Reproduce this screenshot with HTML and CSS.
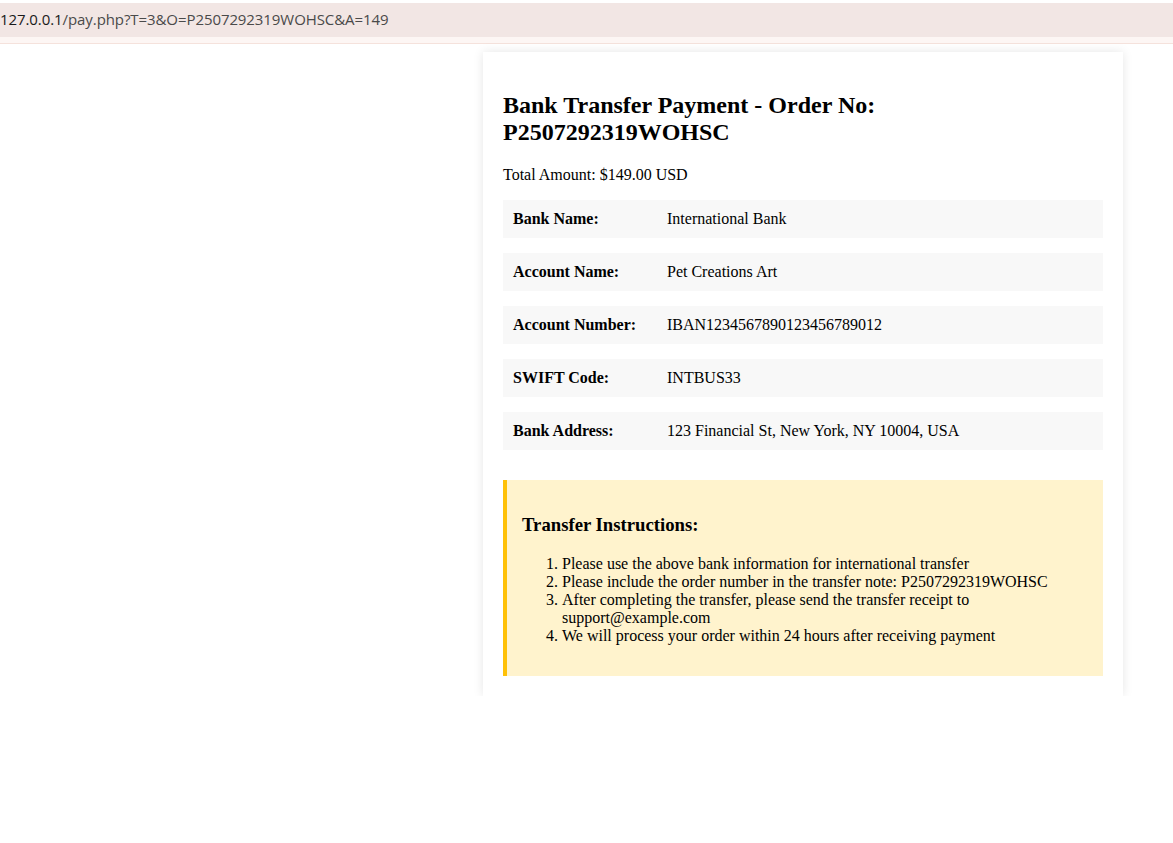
FILE: index.html
```html
<!DOCTYPE html>
<html>
<head>
<meta charset="utf-8">
<title>Bank Transfer Payment</title>
<link rel="stylesheet" href="styles.css">
</head>
<body>
<div class="addressbar">
  <div class="url"><span class="host">127.0.0.1</span>/pay.php?T=3&amp;O=P2507292319WOHSC&amp;A=149</div>
</div>
<div class="addressbar-bottom"></div>
<main class="page">
  <div class="card">
    <h2 class="title">Bank Transfer Payment - Order No: P2507292319WOHSC</h2>
    <p class="total">Total Amount: $149.00 USD</p>
    <div class="row"><span class="label">Bank Name:</span><span class="value">International Bank</span></div>
    <div class="row"><span class="label">Account Name:</span><span class="value">Pet Creations Art</span></div>
    <div class="row"><span class="label">Account Number:</span><span class="value">IBAN1234567890123456789012</span></div>
    <div class="row"><span class="label">SWIFT Code:</span><span class="value">INTBUS33</span></div>
    <div class="row"><span class="label">Bank Address:</span><span class="value">123 Financial St, New York, NY 10004, USA</span></div>
    <div class="instructions">
      <h3 class="inst-title">Transfer Instructions:</h3>
      <ol class="inst-list">
        <li>Please use the above bank information for international transfer</li>
        <li>Please include the order number in the transfer note: P2507292319WOHSC</li>
        <li>After completing the transfer, please send the transfer receipt to support@example.com</li>
        <li>We will process your order within 24 hours after receiving payment</li>
      </ol>
    </div>
  </div>
</main>
</body>
</html>
```
FILE: styles.css
```css
html, body {
  margin: 0;
  padding: 0;
  background: #ffffff;
}
body {
  font-family: "Liberation Serif", "Times New Roman", serif;
  font-size: 16px;
  color: #000;
}
.addressbar {
  margin-top: 3px;
  height: 34px;
  background: #f2e6e4;
  display: flex;
  align-items: center;
}
.url {
  font-family: "Open Sans", "Noto Sans", sans-serif;
  font-size: 15px;
  color: #4a4a4a;
  letter-spacing: -0.08px;
  position: relative;
  top: -1px;
}
.host {
  color: #1a1a1a;
}
.addressbar-bottom {
  height: 6px;
  background: #fdf6f4;
  border-bottom: 1px solid #f5e2dc;
}
.page {
  padding: 8px 0 0 483px;
}
.card {
  width: 600px;
  padding: 20px;
  background: #fff;
  box-shadow: 0 0 10px rgba(0, 0, 0, 0.1);
}
.title {
  font-size: 24px;
  font-weight: bold;
  margin: 20px 0 20px;
  line-height: 27px;
}
.total {
  margin: 0 0 16px;
  line-height: 18px;
}
.row {
  display: flex;
  background: #f8f8f8;
  padding: 10px;
  line-height: 18px;
  margin-bottom: 15px;
}
.label {
  width: 154px;
  flex: none;
  font-weight: bold;
}
.value {
  flex: 1;
}
.instructions {
  margin-top: 30px;
  background: #fff3cd;
  border-left: 4px solid #ffc107;
  padding: 15px;
}
.inst-title {
  font-size: 18.72px;
  font-weight: bold;
  margin: 19px 0 20px;
  line-height: 21px;
}
.inst-list {
  margin: 0 0 16px;
  padding-left: 40px;
  line-height: 18px;
}
```
